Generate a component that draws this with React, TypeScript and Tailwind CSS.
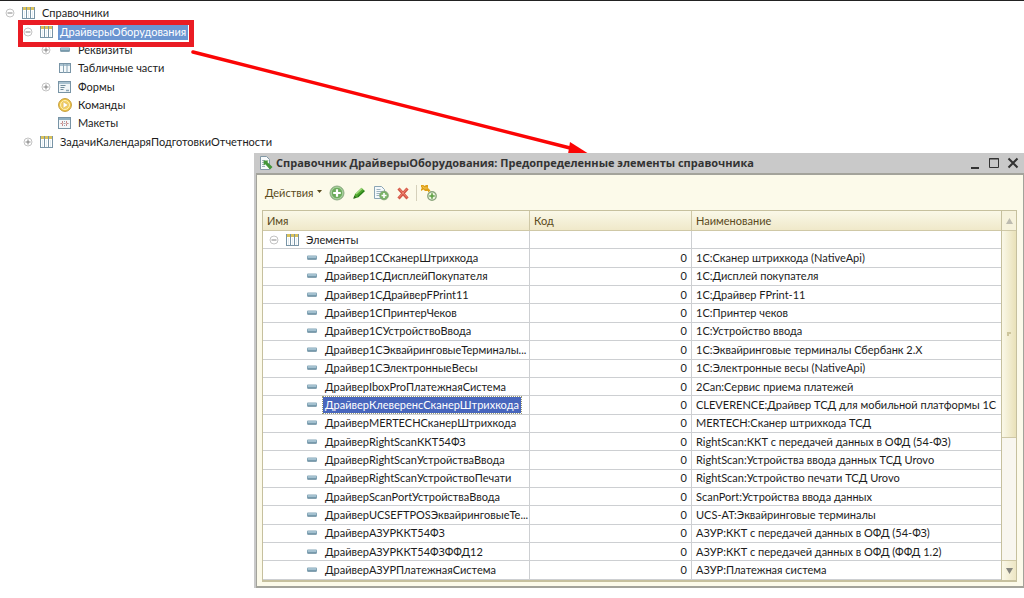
import type { ReactNode } from "react"

type IconName = "catalog" | "attribute" | "table" | "form" | "command" | "layout"

const tree: { name: string; level: number; icon: IconName; toggle?: "open" | "closed"; selected?: boolean }[] = [
  { name: "Справочники", level: 0, icon: "catalog", toggle: "open" },
  { name: "ДрайверыОборудования", level: 1, icon: "catalog", toggle: "open", selected: true },
  { name: "Реквизиты", level: 2, icon: "attribute", toggle: "closed" },
  { name: "Табличные части", level: 2, icon: "table" },
  { name: "Формы", level: 2, icon: "form", toggle: "closed" },
  { name: "Команды", level: 2, icon: "command" },
  { name: "Макеты", level: 2, icon: "layout" },
  { name: "ЗадачиКалендаряПодготовкиОтчетности", level: 1, icon: "catalog", toggle: "closed" },
]

const levelPadding = ["pl-[5px]", "pl-[23px]", "pl-[41px]"]

const drivers = [
  { name: "Драйвер1ССканерШтрихкода", title: "1С:Сканер штрихкода (NativeApi)" },
  { name: "Драйвер1СДисплейПокупателя", title: "1С:Дисплей покупателя" },
  { name: "Драйвер1СДрайверFPrint11", title: "1С:Драйвер FPrint-11" },
  { name: "Драйвер1СПринтерЧеков", title: "1С:Принтер чеков" },
  { name: "Драйвер1СУстройствоВвода", title: "1С:Устройство ввода" },
  { name: "Драйвер1СЭквайринговыеТерминалы...", title: "1С:Эквайринговые терминалы Сбербанк 2.Х" },
  { name: "Драйвер1СЭлектронныеВесы", title: "1С:Электронные весы (NativeApi)" },
  { name: "ДрайверIboxProПлатежнаяСистема", title: "2Can:Сервис приема платежей" },
  { name: "ДрайверКлеверенсСканерШтрихкода", title: "CLEVERENCE:Драйвер ТСД для мобильной платформы 1С", selected: true },
  { name: "ДрайверMERTECHСканерШтрихкода", title: "MERTECH:Сканер штрихкода ТСД" },
  { name: "ДрайверRightScanККТ54ФЗ", title: "RightScan:ККТ с передачей данных в ОФД (54-ФЗ)" },
  { name: "ДрайверRightScanУстройстваВвода", title: "RightScan:Устройства ввода данных ТСД Urovo" },
  { name: "ДрайверRightScanУстройствоПечати", title: "RightScan:Устройство печати ТСД Urovo" },
  { name: "ДрайверScanPortУстройстваВвода", title: "ScanPort:Устройства ввода данных" },
  { name: "ДрайверUCSEFTPOSЭквайринговыеТе...", title: "UCS-AT:Эквайринговые терминалы" },
  { name: "ДрайверАЗУРККТ54ФЗ", title: "АЗУР:ККТ с передачей данных в ОФД (54-ФЗ)" },
  { name: "ДрайверАЗУРККТ54ФЗФФД12", title: "АЗУР:ККТ с передачей данных в ОФД (ФФД 1.2)" },
  { name: "ДрайверАЗУРПлатежнаяСистема", title: "АЗУР:Платежная система" },
]

function Icon({ name }: { name: IconName }) {
  return (
    <svg viewBox="0 0 14 14" className="h-3.5 w-3.5 shrink-0" aria-hidden="true">
      {name === "catalog" && (
        <>
          <rect x="0.5" y="1.5" width="12" height="11" fill="#fff" stroke="#7894a6" />
          <path d="M0.5 1v12M4.5 1v12M8.5 1v12M12.5 1v12" stroke="#7894a6" />
          <path d="M1 2.5h3M5 2.5h3M9 2.5h3" stroke="#d9c25c" strokeWidth="3" />
          <path d="M2.5 5v7M6.5 5v7M10.5 5v7" stroke="#e4eef3" />
        </>
      )}
      {name === "attribute" && (
        <>
          <rect x="2" y="4.5" width="10" height="4" rx="1" fill="#83a5b7" />
          <path d="M3 6h8" stroke="#c4dce8" />
          <path d="M2.5 8.2h9" stroke="#567a8e" strokeWidth="0.8" />
        </>
      )}
      {name === "table" && (
        <>
          <rect x="1.5" y="2.5" width="11" height="9" fill="#f4f9fb" stroke="#7894a6" />
          <path d="M2 4h10" stroke="#a9c2d0" strokeWidth="2" />
          <path d="M5.5 3v9M9 3v9" stroke="#8ba6b6" />
        </>
      )}
      {name === "form" && (
        <>
          <rect x="0.5" y="1.5" width="12" height="11" fill="#f1f6f8" stroke="#7894a6" />
          <path d="M1 3h11" stroke="#a9c2d0" strokeWidth="2" />
          <path d="M2.5 5.5h5M2.5 7.5h4M2.5 9.5h3" stroke="#718d9c" />
          <path d="M8 10.5h3" stroke="#8ba6b6" strokeWidth="1.5" />
        </>
      )}
      {name === "command" && (
        <>
          <circle cx="7" cy="7" r="6.4" fill="#f0c84b" stroke="#c29a38" />
          <circle cx="7" cy="7" r="4.5" fill="#f3cf62" stroke="#fff1b7" />
          <path d="M5.2 3.8l5 3.2-5 3.2z" fill="#fff" stroke="#c29a38" strokeWidth="0.4" />
        </>
      )}
      {name === "layout" && (
        <>
          <rect x="0.5" y="1.5" width="12" height="11" fill="#f4f8fa" stroke="#7894a6" />
          <path d="M1 3h11" stroke="#8fb0c2" strokeWidth="2" />
          <path d="M4.5 5v6M8.5 5v6M2.5 7.5h8" stroke="#c58a8a" strokeDasharray="2 1" />
          <path d="M6.5 5v6" stroke="#9aaab4" strokeDasharray="1 1" />
        </>
      )}
    </svg>
  )
}

function Toggle({ state }: { state?: "open" | "closed" }) {
  if (!state) return <span className="w-2.5 shrink-0" />
  return (
    <button type="button" aria-label={state === "open" ? "Свернуть" : "Развернуть"} className="w-2.5 shrink-0">
      <svg viewBox="0 0 10 10" className="h-2.5 w-2.5">
        <circle cx="5" cy="5" r="4" fill="#fff" stroke="#b4b4b4" strokeWidth="0.8" />
        <path d={state === "open" ? "M2.5 5h5" : "M2.5 5h5M5 2.5v5"} stroke="#777" strokeWidth="0.9" />
      </svg>
    </button>
  )
}

function ToolButton({ label, children }: { label: string; children: ReactNode }) {
  return (
    <button type="button" aria-label={label} className="flex h-5 w-[22px] items-center justify-center">
      <svg viewBox="0 0 16 16" className="h-4 w-4">
        {children}
      </svg>
    </button>
  )
}

function Toolbar() {
  return (
    <div className="flex h-[35px] shrink-0 items-center pl-[3px] text-[#5a4a1c]">
      <button type="button" className="mr-1 flex items-center gap-1">
        Действия
        <svg viewBox="0 0 5 3" className="mb-0.5 h-[3px] w-[5px]">
          <path d="M0 0h5L2.5 3z" fill="#5a4a1c" />
        </svg>
      </button>
      <ToolButton label="Добавить">
        <circle cx="8" cy="8" r="7" fill="#8fbf81" stroke="#90ad87" />
        <circle cx="8" cy="8" r="5.7" fill="#6cab5c" stroke="#b5d8ab" strokeWidth="0.8" />
        <path d="M8 4.2v7.6M4.2 8h7.6" stroke="#fff" strokeWidth="2.2" />
      </ToolButton>
      <ToolButton label="Изменить">
        <path d="M2.5 13.5l1.5-4.5 6.5-6.3 3.3 3.3-6.8 6.4z" fill="#4ea52d" />
        <path d="M5 9l6-5.6" stroke="#a3dc80" strokeWidth="1.4" />
        <path d="M6.8 11.8l6.5-6" stroke="#277d18" strokeWidth="1.2" />
        <path d="M2.3 13.7l1-3.2 2.4 2.2z" fill="#2f6a20" />
      </ToolButton>
      <ToolButton label="Добавить копированием">
        <path d="M1.5 1.5h7l3 3v9h-10z" fill="#f5f9fb" stroke="#8ba5b4" />
        <path d="M3.5 4.5h4M3.5 6.5h6M3.5 8.5h4M3.5 10.5h3" stroke="#9db3bf" />
        <circle cx="11" cy="10.5" r="4.3" fill="#78b365" stroke="#82a579" />
        <path d="M11 8v5M8.5 10.5h5" stroke="#fff" strokeWidth="1.6" />
      </ToolButton>
      <ToolButton label="Удалить">
        <path d="M3.5 3.5l9 10M12.5 3.5l-9 10" stroke="#d35746" strokeWidth="3" />
        <path d="M4 3.5l8 9M12 3.5l-8 9" stroke="#ef8270" strokeWidth="1" />
      </ToolButton>
      <span className="mx-0.5 h-4 w-px bg-[#d5d0bb]" />
      <button type="button" aria-label="Создать группу" className="flex h-5 w-5 items-center justify-center">
        <svg viewBox="0 0 18 18" className="h-[18px] w-[18px]">
          <path d="M1 1h2.5l1 1L6 1h2v3l2.5 2.5-2.5 2V7H5L3.5 5.5 1 7V5l1-1-1-1z" fill="#dfa018" />
          <path d="M2.5 2.5l2 1.5h3" fill="none" stroke="#f5cc5d" />
          <circle cx="12" cy="12" r="4.2" fill="#edf5df" stroke="#8aa47c" strokeWidth="1.4" />
          <path d="M12 9.3v5.4M9.3 12h5.4" stroke="#5ea043" strokeWidth="1.6" />
        </svg>
      </button>
    </div>
  )
}

function ElementsTable() {
  const cell = "border-b border-[#cdcfd2] p-0"
  return (
    <table className="h-full w-full min-w-0 flex-1 table-fixed border-separate border-spacing-0 bg-white">
      <colgroup>
        <col className="w-[267px]" />
        <col className="w-[162px]" />
        <col />
      </colgroup>
      <thead>
        <tr className="h-5 bg-linear-to-b from-[#faf8e8] to-[#efe8c8] text-left text-[#5a4a1c]">
          <th className="border-r border-b border-[#cfc8a6] px-1 py-0 font-normal">Имя</th>
          <th className="border-r border-b border-[#cfc8a6] px-1 py-0 font-normal">Код</th>
          <th className="border-b border-[#cfc8a6] px-1 py-0 font-normal">Наименование</th>
        </tr>
      </thead>
      <tbody>
        <tr>
          <td className={`${cell} border-r`}>
            <div className="flex items-center pl-1.5">
              <Toggle state="open" />
              <span className="w-[7px]" />
              <Icon name="catalog" />
              <span className="ml-1 px-0.5">Элементы</span>
            </div>
          </td>
          <td className={`${cell} border-r`} />
          <td className={cell} />
        </tr>
        {drivers.map((driver) => (
          <tr key={driver.name}>
            <td className={`${cell} border-r`}>
              <div className="flex items-center pl-[42px]">
                <Icon name="attribute" />
                <span
                  className={`ml-1 px-0.5 whitespace-nowrap ${
                    driver.selected ? "bg-[#4866bd] text-white outline outline-dotted outline-[#9a9a70]" : ""
                  }`}
                >
                  {driver.name}
                </span>
              </div>
            </td>
            <td className={`${cell} border-r`}>
              <div className="pr-1 text-right">0</div>
            </td>
            <td className={cell}>
              <div className="pl-1 whitespace-nowrap">{driver.title}</div>
            </td>
          </tr>
        ))}
      </tbody>
    </table>
  )
}

function ScrollBar() {
  return (
    <div className="flex w-[15px] shrink-0 flex-col border-l border-[#c6c09e] bg-[#f8f6ef]">
      <button type="button" aria-label="Вверх" className="flex h-5 items-center justify-center border-b border-[#cfc8a6] bg-[#f6f2dc]">
        <svg viewBox="0 0 7 6" className="h-1.5 w-[7px]">
          <path d="M3.5 0L7 6H0z" fill="#bdbbb0" />
        </svg>
      </button>
      <div className="flex-1">
        <div className="flex h-[63%] items-center justify-center border-b border-[#cfc8a6] bg-linear-to-r from-[#faf8e8] to-[#e9e1b8]">
          <span className="h-1 w-1 border-t-2 border-l-2 border-[#cdc59c]" />
        </div>
      </div>
      <button type="button" aria-label="Вниз" className="flex h-5 items-center justify-center border-t border-[#cfc8a6] bg-linear-to-r from-[#faf8e8] to-[#ede6c4]">
        <svg viewBox="0 0 7 6" className="h-1.5 w-[7px]">
          <path d="M0 0h7L3.5 6z" fill="#85857e" />
        </svg>
      </button>
    </div>
  )
}

function TitleBar() {
  return (
    <header className="flex h-[22px] shrink-0 items-center border-b-2 border-[#a3a39b] bg-[#c9c9c9] pl-[3px] text-[#333]">
      <svg viewBox="0 0 14 14" className="mr-[3px] h-3.5 w-3.5">
        <path d="M1.5 0.5h6l3 3v10h-9z" fill="#f8fbfc" stroke="#8298a6" />
        <path d="M3 4.5h3M3 6.5h3M3 8.5h2M3 10.5h3" stroke="#9db0bb" />
        <path d="M4.5 4.5h5L8.3 6 13.5 11 11 13.5 6.3 8.3 4.8 9.5z" fill="#44963a" />
      </svg>
      <h1 className="flex-1 font-['Open_Sans',sans-serif] font-bold whitespace-nowrap">
        Справочник ДрайверыОборудования: Предопределенные элементы справочника
      </h1>
      <div className="flex gap-[3px] pr-[3px]">
        <button type="button" aria-label="Свернуть">
          <svg viewBox="0 0 16 16" className="h-4 w-4">
            <path d="M4 13h8" stroke="#333" strokeWidth="2" />
          </svg>
        </button>
        <button type="button" aria-label="Развернуть">
          <svg viewBox="0 0 16 16" className="h-4 w-4">
            <path d="M3.5 3.5h9v9h-9zM3 4h10" fill="none" stroke="#333" />
          </svg>
        </button>
        <button type="button" aria-label="Закрыть">
          <svg viewBox="0 0 16 16" className="h-4 w-4">
            <path d="M3.5 3.5l9 9M12.5 3.5l-9 9" stroke="#333" strokeWidth="2" />
          </svg>
        </button>
      </div>
    </header>
  )
}

export default function App() {
  return (
    <main className="relative min-h-screen overflow-hidden border-t border-[#222] bg-white font-[Lato,Arial,sans-serif] text-[11px] leading-4 text-[#1c1c1c]">
      <ul className="grid h-[150px] auto-rows-fr pt-[3px]">
        {tree.map((node) => (
          <li key={node.name} className={`flex items-center ${levelPadding[node.level]}`}>
            <Toggle state={node.toggle} />
            <span className="w-[7px]" />
            <Icon name={node.icon} />
            <span className={`ml-1 px-0.5 ${node.selected ? "bg-[#6b95d1] text-white" : ""}`}>{node.name}</span>
          </li>
        ))}
      </ul>

      {/* Highlight frame and pointer to the window */}
      <div className="absolute top-[19px] left-[18px] h-[27px] w-[176px] border-5 border-[#ea1c24]" />
      <svg viewBox="0 0 400 110" className="absolute top-[47px] left-[190px] h-[110px] w-[400px]" aria-hidden="true">
        <path d="M3 4L384 101" stroke="#fb0505" strokeWidth="3.5" strokeLinecap="round" />
        <path d="M380 94L399 106L378 106z" fill="#fb0505" />
      </svg>

      <section className="absolute top-[152px] right-0 left-[254px] flex h-[435px] flex-col border-l-2 border-[#c9c9c9]">
        <TitleBar />
        <div className="flex min-h-0 flex-1 flex-col border-r border-b-2 border-l border-[#a3a39b] bg-[#fcfaea] pr-1.5 pb-1 pl-[5px]">
          <Toolbar />
          <div className="flex min-h-0 flex-1 border border-b-2 border-[#c6c09e]">
            <ElementsTable />
            <ScrollBar />
          </div>
        </div>
      </section>
    </main>
  )
}
